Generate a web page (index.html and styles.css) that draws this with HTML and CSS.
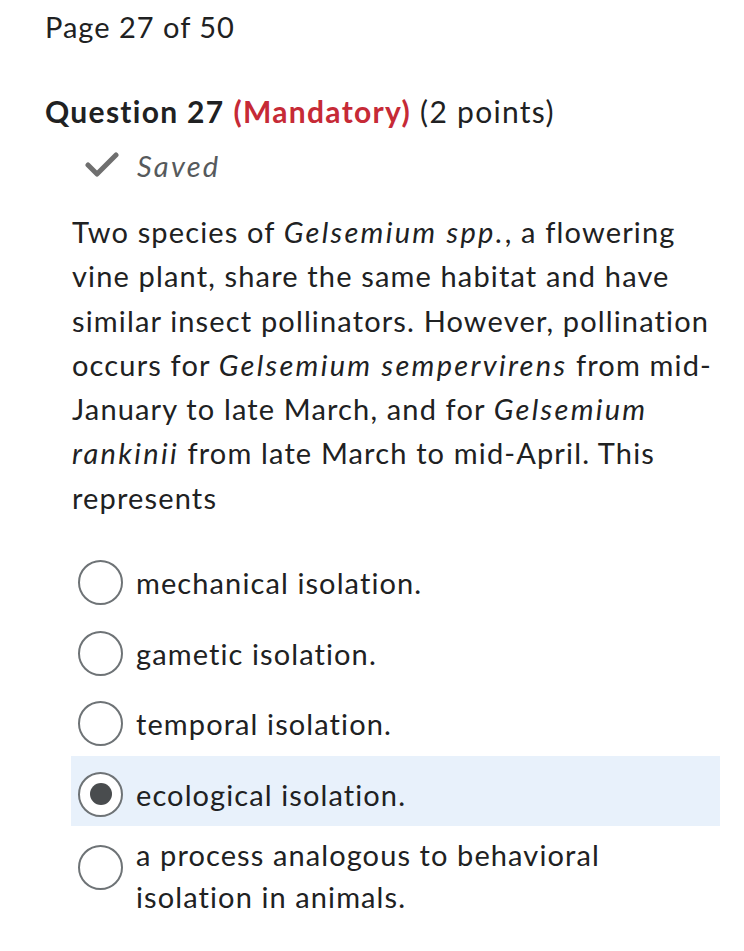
FILE: index.html
```html
<!DOCTYPE html>
<html>
<head>
<meta charset="utf-8">
<link rel="stylesheet" href="styles.css">
</head>
<body>
<div class="page">
  <div class="pager">Page 27 of 50</div>
  <h2 class="qtitle"><b>Question 27</b> <b class="mand">(Mandatory)</b> (2 points)</h2>
  <div class="saved">
    <svg class="check" viewBox="0 0 34 26" width="34" height="26"><path d="M3 13 L12 22 L31 3" fill="none" stroke="#6f6f6f" stroke-width="5" stroke-linecap="round" stroke-linejoin="round"/></svg>
    <span>Saved</span>
  </div>
  <p class="stem">Two species of <i>Gelsemium spp.</i>, a flowering vine plant, share the same habitat and have similar insect pollinators. However, pollination occurs for <i>Gelsemium sempervirens</i> from mid-January to late March, and for <i>Gelsemium rankinii</i> from late March to mid-April. This represents</p>
  <div class="options">
    <div class="opt"><span class="radio"></span><span class="label">mechanical isolation.</span></div>
    <div class="opt"><span class="radio"></span><span class="label">gametic isolation.</span></div>
    <div class="opt"><span class="radio"></span><span class="label">temporal isolation.</span></div>
    <div class="opt sel"><span class="radio on"></span><span class="label">ecological isolation.</span></div>
    <div class="opt multi"><span class="radio"></span><span class="label">a process analogous to behavioral isolation in animals.</span></div>
  </div>
</div>
</body>
</html>
```
FILE: styles.css
```css
html, body { margin: 0; padding: 0; background: #fff; }
body { font-family: Lato, "Open Sans", sans-serif; color: #202122; font-variant-ligatures: none; }
.page { padding: 0 0 0 45px; width: 676px; }
.pager { font-size: 29px; line-height: 36px; padding-top: 9px; letter-spacing: 1px; }
.qtitle { margin: 46px 0 0; font-size: 30px; font-weight: 400; line-height: 40px; letter-spacing: 1.3px; }
.qtitle b { font-weight: 700; }
.mand { color: #c62a36; }
.saved { display: flex; align-items: center; margin: 14px 0 0 40px; height: 40px; font-style: italic; font-size: 29px; color: #565a5c; gap: 18px; letter-spacing: 2.2px; }
.check { display: block; }
.stem { margin: 25px 0 0 27px; font-size: 29px; line-height: 44.3px; width: 648px; letter-spacing: 1.15px; }
.stem i { letter-spacing: 2.3px; }
.options { margin: 24px 0 0 26px; display: flex; flex-direction: column; }
.opt { display: flex; align-items: center; gap: 13px; height: 70.5px; padding-left: 7px; padding-top: 7px; box-sizing: border-box; width: 649px; font-size: 29px; letter-spacing: 1.1px; }
.opt.sel { background: #e8f1fb; }
.opt.multi { align-items: flex-start; height: auto; padding-top: 8px; line-height: 42px; }
.opt.multi .radio { margin-top: 11px; }
.radio { width: 41px; height: 41px; border: 2px solid #6e7376; border-radius: 50%; background: #fff; flex: none; box-sizing: content-box; display: flex; align-items: center; justify-content: center; }
.radio.on::after { content: ""; width: 22px; height: 22px; border-radius: 50%; background: #494c4e; }
.label { display: block; }
```
